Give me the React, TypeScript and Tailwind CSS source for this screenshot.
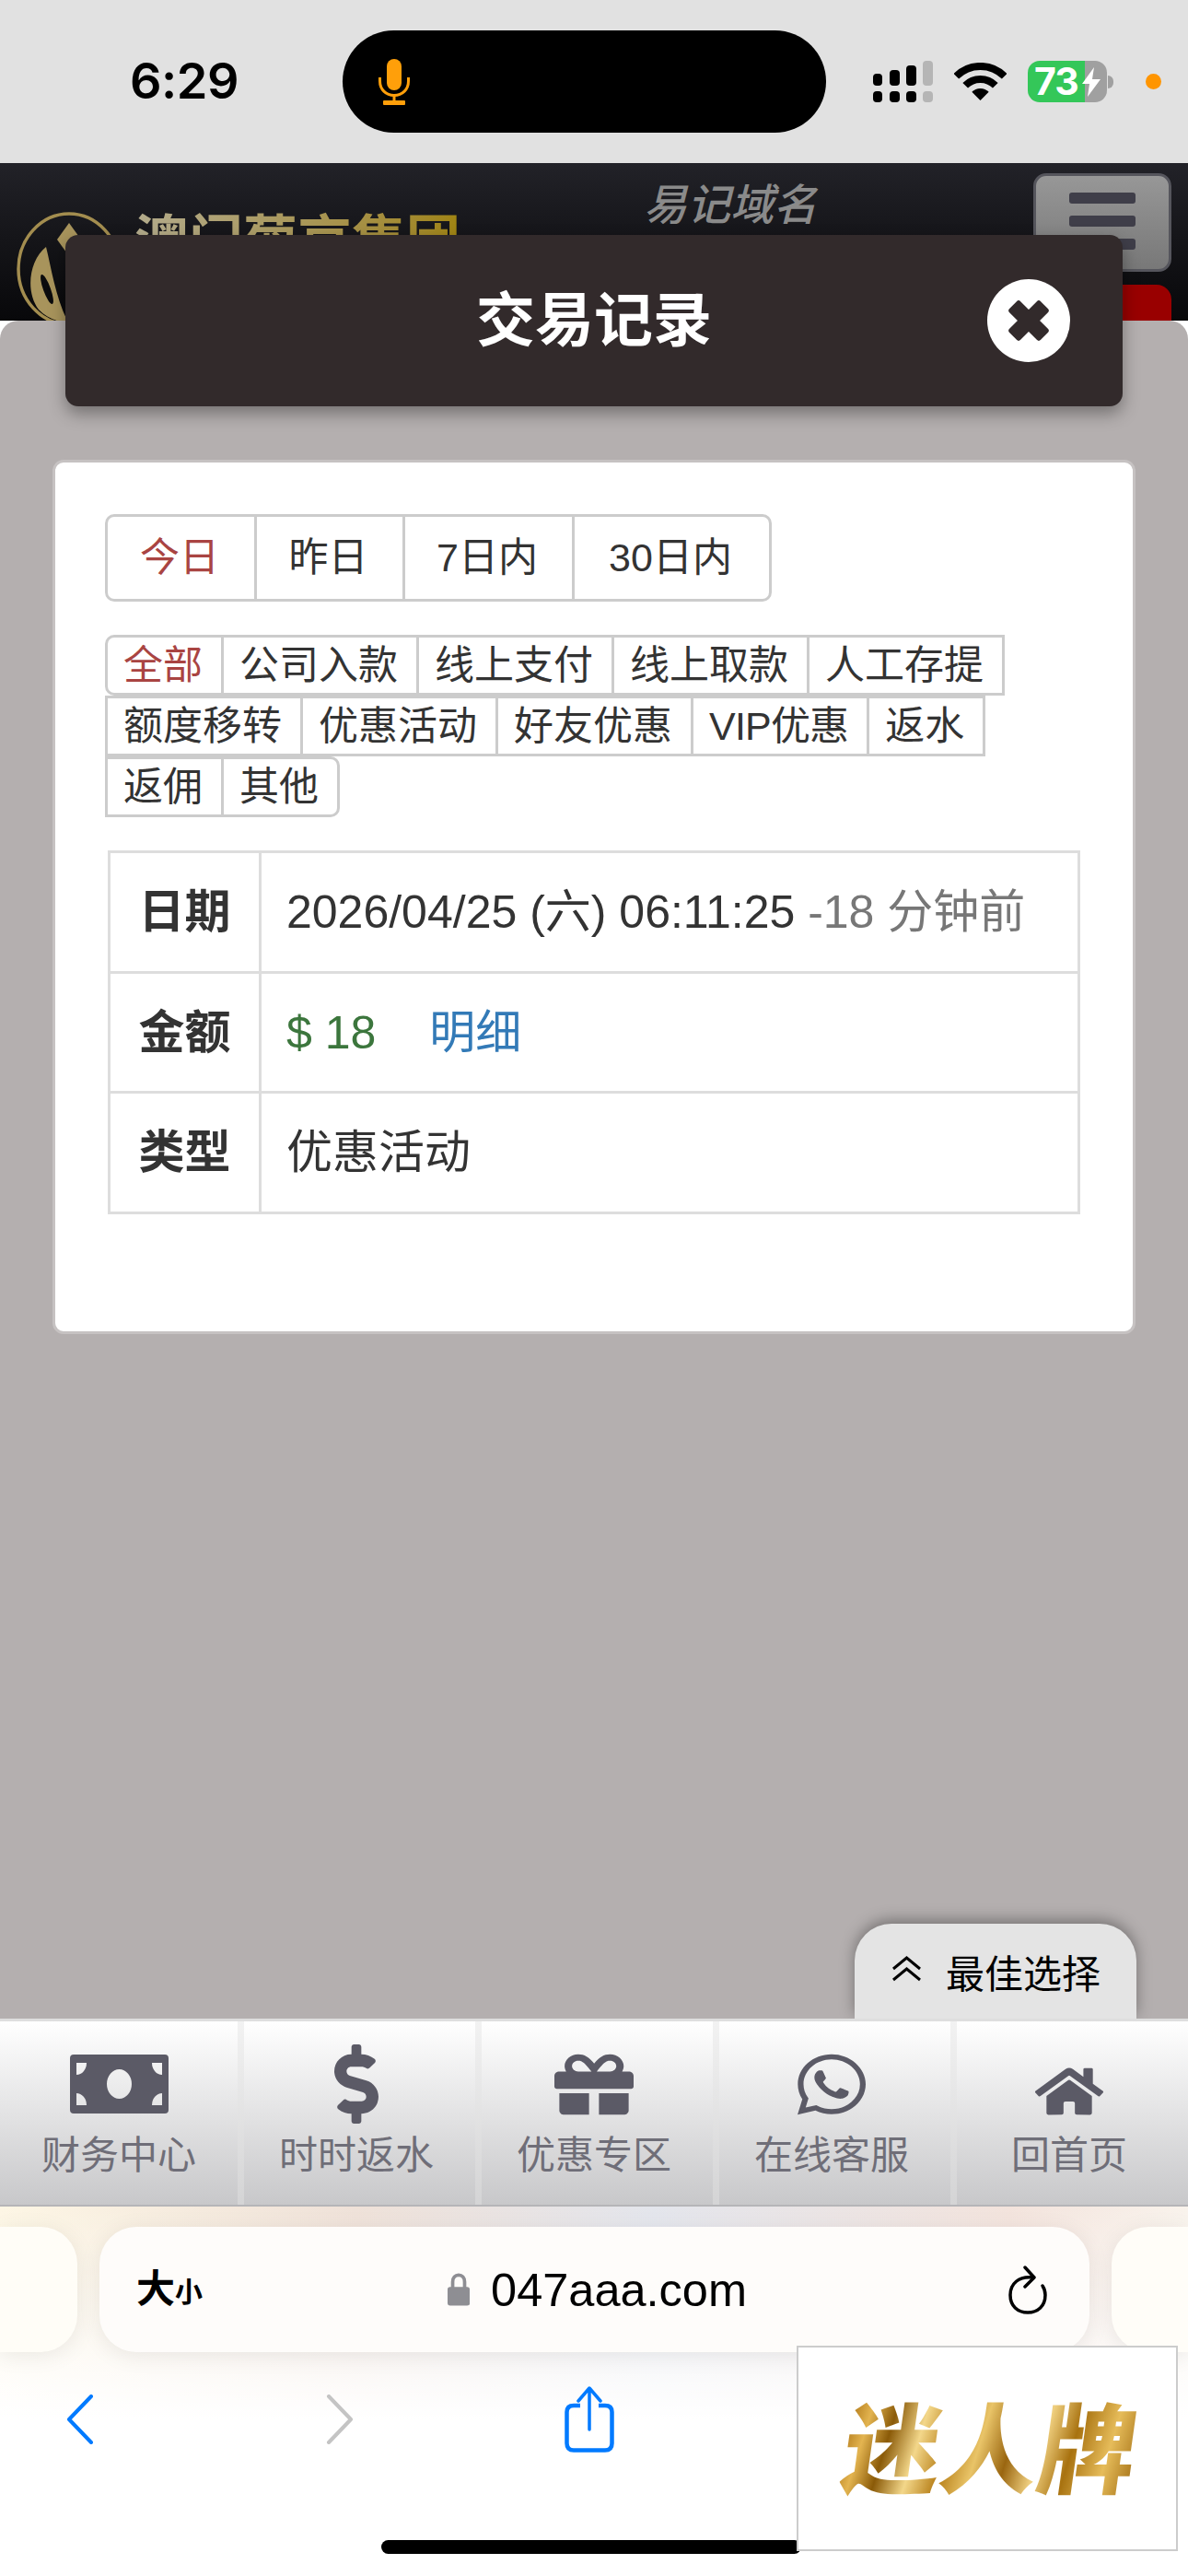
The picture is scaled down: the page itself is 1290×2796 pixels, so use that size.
import { FaDollarSign, FaGift, FaHome, FaWhatsapp } from 'react-icons/fa'

const dateTabs = [
  { label: '今日', width: 'w-[165px]', active: true, round: 'rounded-l-[10px]' },
  { label: '昨日', width: 'w-[164px]', active: false, round: '' },
  { label: '7日内', width: 'w-[187px]', active: false, round: '' },
  { label: '30日内', width: 'w-[217px]', active: false, round: 'rounded-r-[10px]' },
]

const filters = [
  { label: '全部', active: true, round: 'rounded-l-[10px]' },
  { label: '公司入款', active: false, round: '' },
  { label: '线上支付', active: false, round: '' },
  { label: '线上取款', active: false, round: '' },
  { label: '人工存提', active: false, round: '' },
  { label: '额度移转', active: false, round: '' },
  { label: '优惠活动', active: false, round: '' },
  { label: '好友优惠', active: false, round: '' },
  { label: 'VIP优惠', active: false, round: 'tracking-[-0.8px]' },
  { label: '返水', active: false, round: '' },
  { label: '返佣', active: false, round: '' },
  { label: '其他', active: false, round: 'rounded-r-[10px]' },
]

function MoneyIcon() {
  return (
    <svg width="107" height="64" viewBox="0 0 107 64" className="text-[#5b5a66]">
      <path
        fill="currentColor"
        fillRule="evenodd"
        d="M4 0H103A4 4 0 0 1 107 4V60A4 4 0 0 1 103 64H4A4 4 0 0 1 0 60V4A4 4 0 0 1 4 0ZM7 9V22A11 13 0 0 0 18 9ZM100 9H89A11 13 0 0 0 100 22ZM7 55H18A11 13 0 0 0 7 42ZM100 55V42A11 13 0 0 0 89 55ZM53.5 16A13.5 16 0 1 0 53.5 48A13.5 16 0 1 0 53.5 16Z"
      />
    </svg>
  )
}

function StatusBar() {
  return (
    <div className="flex h-[177px] items-center bg-[#e1e1e1]">
      <div className="w-[372px] pl-[141px] pb-[1px] font-['Inter',sans-serif] text-[54px] leading-none font-semibold tracking-[-0.5px] text-black">
        6:29
      </div>
      <div className="flex h-[111px] w-[525px] items-center rounded-full bg-black pl-[39px]">
        <svg width="34" height="50" viewBox="0 0 34 50" fill="none">
          <rect x="9" y="0" width="16" height="34" rx="8" fill="#ff9f0a" />
          <path d="M1.5 20V24C1.5 33 8 39.5 17 39.5S32.5 33 32.5 24V20" stroke="#ff9f0a" strokeWidth="3" />
          <rect x="15.5" y="39" width="3" height="8" fill="#ff9f0a" />
          <rect x="5" y="45" width="24" height="5" rx="1" fill="#ff9f0a" />
        </svg>
      </div>
      <svg width="65" height="45" viewBox="0 0 65 45" className="ml-[51px]">
        <rect x="0" y="14" width="10" height="13" rx="4" fill="#000" />
        <rect x="18" y="10" width="11" height="17" rx="4" fill="#000" />
        <rect x="36" y="5" width="11" height="22" rx="4" fill="#000" />
        <rect x="54" y="0" width="11" height="27" rx="4" fill="#b5b5b5" />
        <rect x="0" y="33" width="10" height="12" rx="4" fill="#000" />
        <rect x="18" y="33" width="11" height="12" rx="4" fill="#000" />
        <rect x="36" y="33" width="11" height="12" rx="4" fill="#000" />
        <rect x="54" y="33" width="11" height="12" rx="4" fill="#b5b5b5" />
      </svg>
      <svg width="57" height="41" viewBox="0 0 57 41" fill="none" className="ml-[23px]">
        <path d="M2.3 14.8A37 37 0 0 1 54.7 14.8" stroke="#000" strokeWidth="8" />
        <path d="M12.2 24.7A23 23 0 0 1 44.8 24.7" stroke="#000" strokeWidth="8" />
        <path d="M28.5 41L19.3 31.8A13 13 0 0 1 37.7 31.8Z" fill="#000" />
      </svg>
      <div className="ml-[23px] flex h-[45px] w-[86px]">
        <div className="flex w-[62px] items-center rounded-l-[13px] bg-[#34c759] pl-[7px] font-['Inter',sans-serif] text-[41px] leading-none font-bold tracking-[-1px] whitespace-nowrap text-white">
          73
        </div>
        <div className="flex w-[24px] items-center rounded-r-[13px] bg-[#a0a0a0]">
          <svg width="20" height="32" viewBox="0 0 20 32" className="-ml-[3px]">
            <path d="M13 0L0 18H8L6 32L20 13H11Z" fill="#fff" />
          </svg>
        </div>
      </div>
      <div className="ml-[1px] h-[14px] w-[6px] rounded-r-full bg-[#a0a0a0]" />
      <div className="ml-[35px] h-[17px] w-[17px] rounded-full bg-[#ff9500]" />
    </div>
  )
}

function SiteHeader() {
  return (
    <div className="flex h-[171px] items-start overflow-hidden bg-gradient-to-b from-[#222228] to-[#08080a]">
      <svg width="114" height="124" viewBox="0 0 114 124" fill="none" className="mt-[53px] ml-[18px] shrink-0">
        <ellipse cx="57" cy="62" rx="55" ry="60" stroke="#a38d4f" strokeWidth="3.5" />
        <path d="M57 12L70 30L57 48L44 30Z" fill="#a8945c" />
        <path d="M32 38C14 52 9 86 24 106C34 116 46 120 56 120C42 92 38 62 32 38Z" fill="#a8945c" />
        <ellipse cx="33" cy="84" rx="4" ry="17" transform="rotate(-20 33 84)" fill="#0b0b0d" />
      </svg>
      <div className="mt-[50px] ml-[14px] shrink-0 bg-gradient-to-r from-[#b3ab8c] to-[#a0840f] bg-clip-text text-[59px] leading-[70px] font-bold text-transparent">
        澳门葡京集团
      </div>
      <div className="mt-[16px] ml-[199px] shrink-0 text-[47px] leading-[60px] font-medium text-[#8a8a8a] italic">
        易记域名
      </div>
      <div className="mt-[11px] mr-[18px] ml-auto flex w-[150px] shrink-0 flex-col">
        <div className="flex h-[107px] flex-col items-center gap-[13px] rounded-[14px] border-[3px] border-[#55555c] bg-gradient-to-b from-[#979797] to-[#787878] pt-[18px]">
          <div className="h-[12px] w-[72px] rounded-[3px] bg-[#3f3e49]" />
          <div className="h-[12px] w-[72px] rounded-[3px] bg-[#3f3e49]" />
          <div className="h-[12px] w-[72px] rounded-[3px] bg-[#3f3e49]" />
        </div>
        <div className="mt-[14px] h-[50px] rounded-tr-[16px] bg-[#990000]" />
      </div>
    </div>
  )
}

function RecordCard() {
  return (
    <div className="mx-[57px] mt-[58px] rounded-[12px] border-[3px] border-[#c6c2c2] bg-white px-[57px] pt-[56px] pb-[127px] text-[43px] text-[#333]">
      <div className="flex">
        {dateTabs.map((tab) => (
          <div
            key={tab.label}
            className={`-ml-[3px] flex h-[95px] items-center justify-center border-[3px] border-[#ccc] pr-[3px] ${tab.width} ${tab.round} ${tab.active ? 'text-[#a94442]' : ''}`}
          >
            {tab.label}
          </div>
        ))}
      </div>
      <div className="mt-[36px] flex flex-wrap">
        {filters.map((item) => (
          <div
            key={item.label}
            className={`-ml-[3px] flex h-[66px] items-center border-[3px] border-[#ccc] pt-[1px] pr-[20px] pl-[17px] ${item.round} ${item.active ? 'text-[#a94442]' : ''}`}
          >
            {item.label}
          </div>
        ))}
      </div>
      <table className="mt-[36px] w-full border-collapse text-[50px] text-[#333]">
        <tbody>
          <tr className="h-[130.5px]">
            <th className="w-[164px] border-[3px] border-[#ddd] pt-[2px] text-center font-bold">日期</th>
            <td className="border-[3px] border-[#ddd] pt-[2px] pl-[27px]">
              2026/04/25 (六) 06:11:25 <span className="text-[#777]">-18 分钟前</span>
            </td>
          </tr>
          <tr className="h-[130.5px]">
            <th className="border-[3px] border-[#ddd] pt-[2px] text-center font-bold">金额</th>
            <td className="border-[3px] border-[#ddd] pt-[2px] pl-[27px]">
              <span className="text-[#3c763d]">$ 18</span>
              <span className="ml-[58px] text-[#337ab7]">明细</span>
            </td>
          </tr>
          <tr className="h-[130.5px]">
            <th className="border-[3px] border-[#ddd] pt-[2px] text-center font-bold">类型</th>
            <td className="border-[3px] border-[#ddd] pt-[2px] pl-[27px]">优惠活动</td>
          </tr>
        </tbody>
      </table>
    </div>
  )
}

function BottomNav() {
  const items = [
    { label: '财务中心', icon: <MoneyIcon /> },
    { label: '时时返水', icon: <FaDollarSign className="h-[86px] w-[48px] text-[#5b5a66]" preserveAspectRatio="none" /> },
    { label: '优惠专区', icon: <FaGift className="h-[75px] w-[86px] text-[#5b5a66]" preserveAspectRatio="none" /> },
    { label: '在线客服', icon: <FaWhatsapp className="h-[75px] w-[74px] text-[#5b5a66]" preserveAspectRatio="none" /> },
    { label: '回首页', icon: <FaHome className="mt-[16px] h-[58px] w-[74px] text-[#5b5a66]" preserveAspectRatio="none" /> },
  ]
  return (
    <div className="relative z-10 grid h-[204px] shrink-0 grid-cols-5 border-t-[3px] border-b-[2px] border-t-[#dedede] border-b-[#b5b5b8] bg-gradient-to-b from-[#f2f2f2] to-[#d4d4d5]">
      {items.map((item, i) => (
        <div key={item.label} className={`flex ${i > 0 ? 'pl-[7px]' : ''}`}>
          <div
            className={`flex flex-1 flex-col items-center bg-gradient-to-b from-white to-[#c8c8ca] pt-[25px] ${i > 0 ? 'pr-[7px]' : ''}`}
          >
            <div className="flex h-[86px] items-center">{item.icon}</div>
            <div className="mt-[10px] text-[42px] leading-[50px] text-[#6f6e78]">{item.label}</div>
          </div>
        </div>
      ))}
    </div>
  )
}

function SafariBar() {
  return (
    <div className="relative h-[401px] shrink-0 bg-[linear-gradient(to_bottom,transparent_0,#ffffff_230px),linear-gradient(to_right,#fdf6e4,#efe1d8_30%,#e3e5ec_55%,#f3e3dc_85%,#f9f3ec)] pt-[22px]">
      <div className="flex h-[136px] gap-[24px]">
        <div className="w-[84px] rounded-r-[40px] bg-[#fffdf7] shadow-[0_4px_24px_rgba(0,0,0,0.08)]" />
        <div className="flex w-[1075px] items-center rounded-[40px] bg-[#fefcfa] pl-[40px] shadow-[0_4px_24px_rgba(0,0,0,0.08)]">
          <div className="flex w-[72px] items-end font-semibold text-black">
            <span className="text-[42px] leading-[44px]">大</span>
            <span className="text-[30px] leading-[38px]">小</span>
          </div>
          <div className="ml-[266px] flex w-[325px] items-center">
            <svg width="26" height="38" viewBox="0 0 26 38" fill="none">
              <path d="M6 18V10C6 5 9 2 13 2S20 5 20 10V18" stroke="#8e8e93" strokeWidth="4" />
              <rect x="0" y="16" width="26" height="22" rx="3" fill="#8e8e93" />
            </svg>
            <span className="ml-[23px] pt-[2px] text-[50.5px] leading-none text-black">047aaa.com</span>
          </div>
          <svg width="43" height="53" viewBox="0 0 43 53" fill="none" className="ml-[284px]">
            <path d="M27 13C11 11 2 20 2 32S10 51 21 51S40 44 40 32C40 28 39 25 37 22" stroke="#000" strokeWidth="3.5" strokeLinecap="round" />
            <path d="M18 2L28 13L18 23" stroke="#000" strokeWidth="3.5" strokeLinecap="round" strokeLinejoin="round" />
          </svg>
        </div>
        <div className="flex-1 rounded-l-[40px] bg-[#fffdf8] shadow-[0_4px_24px_rgba(0,0,0,0.08)]" />
      </div>
      <div className="mt-[37px] flex h-[72px] items-center">
        <svg width="30" height="54" viewBox="0 0 30 54" fill="none" className="ml-[72px]">
          <path d="M27 2L3 27L27 52" stroke="#007aff" strokeWidth="4" strokeLinecap="round" strokeLinejoin="round" />
        </svg>
        <svg width="30" height="54" viewBox="0 0 30 54" fill="none" className="ml-[252px]">
          <path d="M3 2L27 27L3 52" stroke="#c4c4c4" strokeWidth="4" strokeLinecap="round" strokeLinejoin="round" />
        </svg>
        <svg width="54" height="72" viewBox="0 0 54 72" fill="none" className="ml-[229px]">
          <path d="M17 21H10C5 21 2.5 23.5 2.5 28V62C2.5 67 5 69.5 10 69.5H44C49 69.5 51.5 67 51.5 62V28C51.5 23.5 49 21 44 21H37" stroke="#007aff" strokeWidth="4.5" />
          <path d="M27 47V3M15 16L27 2L39 16" stroke="#007aff" strokeWidth="3.5" strokeLinecap="round" strokeLinejoin="round" />
        </svg>
      </div>
      <div className="absolute bottom-[24px] left-[414px] h-[15px] w-[456px] rounded-full bg-black" />
      <div className="absolute top-[151px] right-[11px] flex h-[223px] w-[414px] items-center justify-center border-2 border-[#ccc] bg-white pt-[6px] pl-[6px]">
        <span className="-skew-x-[8deg] bg-[linear-gradient(100deg,#a96f10,#e3b450_8%,#8a5a08_16%,#f3d78a_26%,#b77f18_36%,#e9c468_46%,#9a6610_56%,#f0d080_66%,#a87210_76%,#e6bc5a_88%,#a06c12)] bg-clip-text text-[106px] leading-[120px] font-black text-transparent">
          迷人牌
        </span>
      </div>
    </div>
  )
}

export default function App() {
  return (
    <div className="flex h-[2796px] w-[1290px] flex-col overflow-hidden bg-white font-['Liberation_Sans','Noto_Sans_CJK_SC',sans-serif]">
      <StatusBar />
      <SiteHeader />
      <div className="flex min-h-0 flex-1 flex-col rounded-t-[20px] bg-[#b4afaf]">
        <div className="relative z-10 mx-[71px] -mt-[93px] flex h-[186px] items-center justify-center rounded-[14px] bg-[#322a2b] shadow-[0_8px_18px_rgba(0,0,0,0.35)]">
          <span className="text-[64px] font-bold text-white">交易记录</span>
          <svg width="90" height="90" viewBox="0 0 90 90" className="absolute top-[48px] right-[57px]">
            <circle cx="45" cy="45" r="45" fill="#fff" />
            <rect x="21" y="36.5" width="48" height="17" rx="3" transform="rotate(45 45 45)" fill="#322a2b" />
            <rect x="21" y="36.5" width="48" height="17" rx="3" transform="rotate(-45 45 45)" fill="#322a2b" />
          </svg>
        </div>
        <RecordCard />
        <div className="mt-auto mr-[56px] flex h-[103px] w-[306px] items-start self-end rounded-t-[40px] bg-[#e4e4e4] pt-[31px] pl-[40px] shadow-[0_-4px_16px_rgba(0,0,0,0.35)]">
          <svg width="33" height="28" viewBox="0 0 33 28" fill="none" className="mt-[4px]">
            <path d="M2 14L16.5 2L31 14M2 26L16.5 14L31 26" stroke="#000" strokeWidth="3" />
          </svg>
          <span className="ml-[26px] text-[42px] leading-[50px] text-black">最佳选择</span>
        </div>
      </div>
      <BottomNav />
      <SafariBar />
    </div>
  )
}
